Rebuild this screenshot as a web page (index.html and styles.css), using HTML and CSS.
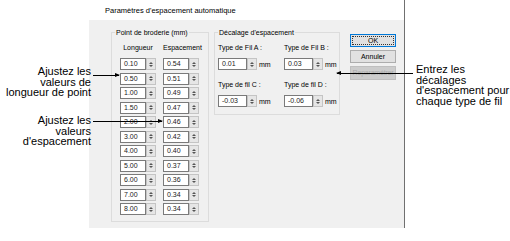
FILE: index.html
```html
<!DOCTYPE html>
<html>

<head>
    <title>Paramètres d'espacement automatique</title>
    <link rel="stylesheet" href="styles.css">
</head>

<body>
    <div class="page">
        <div class="dialog">
            <div class="titlebar">Paramètres d'espacement automatique</div>

            <div class="dialog-body">
                <!-- Stitch length / spacing table -->
                <div class="group stitch">
                    <span class="group-label">Point de broderie (mm)</span>
                    <div class="stitch-grid">
                        <div class="col-head">Longueur</div>
                        <div class="col-head">Espacement</div>

                        <div class="spin"><span class="spin-value">0.10</span><span class="spin-btn"><i class="up"></i><i class="down"></i></span></div>
                        <div class="spin"><span class="spin-value">0.54</span><span class="spin-btn"><i class="up"></i><i class="down"></i></span></div>
                        <div class="spin"><span class="spin-value">0.50</span><span class="spin-btn"><i class="up"></i><i class="down"></i></span></div>
                        <div class="spin"><span class="spin-value">0.51</span><span class="spin-btn"><i class="up"></i><i class="down"></i></span></div>
                        <div class="spin"><span class="spin-value">1.00</span><span class="spin-btn"><i class="up"></i><i class="down"></i></span></div>
                        <div class="spin"><span class="spin-value">0.49</span><span class="spin-btn"><i class="up"></i><i class="down"></i></span></div>
                        <div class="spin"><span class="spin-value">1.50</span><span class="spin-btn"><i class="up"></i><i class="down"></i></span></div>
                        <div class="spin"><span class="spin-value">0.47</span><span class="spin-btn"><i class="up"></i><i class="down"></i></span></div>
                        <div class="spin"><span class="spin-value">2.00</span><span class="spin-btn"><i class="up"></i><i class="down"></i></span></div>
                        <div class="spin"><span class="spin-value">0.46</span><span class="spin-btn"><i class="up"></i><i class="down"></i></span></div>
                        <div class="spin"><span class="spin-value">3.00</span><span class="spin-btn"><i class="up"></i><i class="down"></i></span></div>
                        <div class="spin"><span class="spin-value">0.42</span><span class="spin-btn"><i class="up"></i><i class="down"></i></span></div>
                        <div class="spin"><span class="spin-value">4.00</span><span class="spin-btn"><i class="up"></i><i class="down"></i></span></div>
                        <div class="spin"><span class="spin-value">0.40</span><span class="spin-btn"><i class="up"></i><i class="down"></i></span></div>
                        <div class="spin"><span class="spin-value">5.00</span><span class="spin-btn"><i class="up"></i><i class="down"></i></span></div>
                        <div class="spin"><span class="spin-value">0.37</span><span class="spin-btn"><i class="up"></i><i class="down"></i></span></div>
                        <div class="spin"><span class="spin-value">6.00</span><span class="spin-btn"><i class="up"></i><i class="down"></i></span></div>
                        <div class="spin"><span class="spin-value">0.36</span><span class="spin-btn"><i class="up"></i><i class="down"></i></span></div>
                        <div class="spin"><span class="spin-value">7.00</span><span class="spin-btn"><i class="up"></i><i class="down"></i></span></div>
                        <div class="spin"><span class="spin-value">0.34</span><span class="spin-btn"><i class="up"></i><i class="down"></i></span></div>
                        <div class="spin"><span class="spin-value">8.00</span><span class="spin-btn"><i class="up"></i><i class="down"></i></span></div>
                        <div class="spin"><span class="spin-value">0.34</span><span class="spin-btn"><i class="up"></i><i class="down"></i></span></div>
                    </div>
                </div>

                <!-- Thread type offsets -->
                <div class="group offset">
                    <span class="group-label">Décalage d'espacement</span>
                    <div class="offset-grid">
                        <div class="field">
                            <div class="field-label">Type de Fil A :</div>
                            <div class="field-row">
                                <div class="spin spin-wide"><span class="spin-value">0.01</span><span class="spin-btn"><i class="up"></i><i class="down"></i></span></div>
                                <span class="unit">mm</span>
                            </div>
                        </div>
                        <div class="field">
                            <div class="field-label">Type de Fil B :</div>
                            <div class="field-row">
                                <div class="spin spin-wide"><span class="spin-value">0.03</span><span class="spin-btn"><i class="up"></i><i class="down"></i></span></div>
                                <span class="unit">mm</span>
                            </div>
                        </div>
                        <div class="field">
                            <div class="field-label">Type de fil C :</div>
                            <div class="field-row">
                                <div class="spin spin-wide"><span class="spin-value">-0.03</span><span class="spin-btn"><i class="up"></i><i class="down"></i></span></div>
                                <span class="unit">mm</span>
                            </div>
                        </div>
                        <div class="field">
                            <div class="field-label">Type de fil D :</div>
                            <div class="field-row">
                                <div class="spin spin-wide"><span class="spin-value">-0.06</span><span class="spin-btn"><i class="up"></i><i class="down"></i></span></div>
                                <span class="unit">mm</span>
                            </div>
                        </div>
                    </div>
                </div>

                <div class="buttons">
                    <div class="btn btn-default">OK</div>
                    <div class="btn">Annuler</div>
                    <div class="btn btn-disabled">Reparamétrer</div>
                </div>
            </div>
        </div>

        <!-- Callouts -->
        <div class="note note-length">Ajustez les<br>valeurs de<br>longueur de point</div>
        <div class="arrow arrow-right arrow-length"></div>

        <div class="note note-spacing">Ajustez les<br>valeurs<br>d'espacement</div>
        <div class="arrow arrow-right arrow-spacing"></div>

        <div class="note note-offset">Entrez les<br>décalages<br>d'espacement pour<br>chaque type de fil</div>
        <div class="arrow arrow-left arrow-offset"></div>
    </div>
</body>

</html>
```

FILE: styles.css
```css
body {
    margin: 0;
    background-color: #fff;
    font-family: "Liberation Sans", Arial, sans-serif;
    color: #000;
}

.page {
    position: relative;
    width: 510px;
    height: 241px;
    overflow: hidden;
}

/* Dialog window */
.dialog {
    margin-left: 89px;
    width: 315px;
    border-right: 1px solid #707070;
}

.titlebar {
    height: 20px;
    line-height: 21px;
    padding-left: 16px;
    font-size: 7.5px;
}

.dialog-body {
    height: 208px;
    box-sizing: border-box;
    padding: 12px 0 0 22px;
    background-color: #f0f0f0;
    display: flex;
    align-items: flex-start;
}

/* Group boxes */
.group {
    border: 1px solid #dcdcdc;
    box-sizing: border-box;
    font-size: 7px;
}

.group-label {
    display: table;
    margin: -5px 0 0 3px;
    padding: 0 1px;
    line-height: 9px;
    background-color: #f0f0f0;
}

.stitch {
    width: 98px;
    height: 190px;
}

.stitch-grid {
    display: grid;
    grid-template-columns: 36px 36px;
    column-gap: 7px;
    row-gap: 2.5px;
    padding: 6px 0 0 8px;
}

.col-head {
    line-height: 9px;
    margin-bottom: 3.5px;
    text-align: center;
}

.offset {
    width: 126px;
    height: 83px;
    margin-left: 5px;
}

.offset-grid {
    display: grid;
    grid-template-columns: 66px 66px;
    padding: 6px 0 0 3px;
}

.field-label {
    line-height: 9px;
    margin-bottom: 6px;
}

.field-row {
    display: flex;
    align-items: center;
    margin-bottom: 10px;
}

.unit {
    margin-left: 2px;
    font-size: 7px;
}

/* Spin boxes */
.spin {
    display: flex;
    height: 12px;
}

.spin-value {
    width: 26px;
    box-sizing: border-box;
    border: 1px solid #7a7a7a;
    background-color: #fff;
    padding-left: 3px;
    font-size: 7px;
    line-height: 10px;
    color: #222;
}

.spin-wide .spin-value {
    width: 29px;
}

.spin-btn {
    width: 10px;
    box-sizing: border-box;
    border: 1px solid #c4c4c4;
    background-color: #e6e6e6;
    display: flex;
    flex-direction: column;
    align-items: center;
    justify-content: center;
    gap: 1px;
}

.spin-btn i {
    width: 0;
    height: 0;
    border-left: 2px solid transparent;
    border-right: 2px solid transparent;
}

.spin-btn .up {
    border-bottom: 2px solid #555;
}

.spin-btn .down {
    border-top: 2px solid #555;
}

/* Buttons */
.buttons {
    width: 46px;
    margin-left: 10px;
    padding-top: 2px;
    display: flex;
    flex-direction: column;
    gap: 3px;
}

.btn {
    height: 13px;
    box-sizing: border-box;
    border: 1px solid #adadad;
    background-color: #e1e1e1;
    font-size: 7px;
    line-height: 11px;
    text-align: center;
    white-space: nowrap;
}

.btn-default {
    border-color: #0078d7;
    outline: 1px dotted #333;
    outline-offset: -3px;
}

.btn-disabled {
    height: 14px;
    background-color: #cccccc;
    border-color: #bfbfbf;
    color: #a8a8a8;
    letter-spacing: -0.2px;
    line-height: 12px;
}

/* Callouts */
.note {
    position: absolute;
    font-size: 11px;
    line-height: 10.5px;
}

.note-length {
    right: 419px;
    top: 66px;
    text-align: right;
}

.note-spacing {
    right: 419px;
    top: 115px;
    text-align: right;
}

.note-offset {
    left: 416px;
    top: 64px;
}

.arrow {
    position: absolute;
    height: 1px;
    background-color: #000;
}

.arrow-right::after,
.arrow-left::before {
    content: "";
    position: absolute;
    top: -2px;
    border-top: 2.5px solid transparent;
    border-bottom: 2.5px solid transparent;
}

.arrow-right::after {
    right: -1px;
    border-left: 5px solid #000;
}

.arrow-left::before {
    left: -1px;
    border-right: 5px solid #000;
}

.arrow-length {
    left: 93px;
    top: 75px;
    width: 26px;
}

.arrow-spacing {
    left: 93px;
    top: 121px;
    width: 69px;
}

.arrow-offset {
    left: 337px;
    top: 73px;
    width: 76px;
}
```
